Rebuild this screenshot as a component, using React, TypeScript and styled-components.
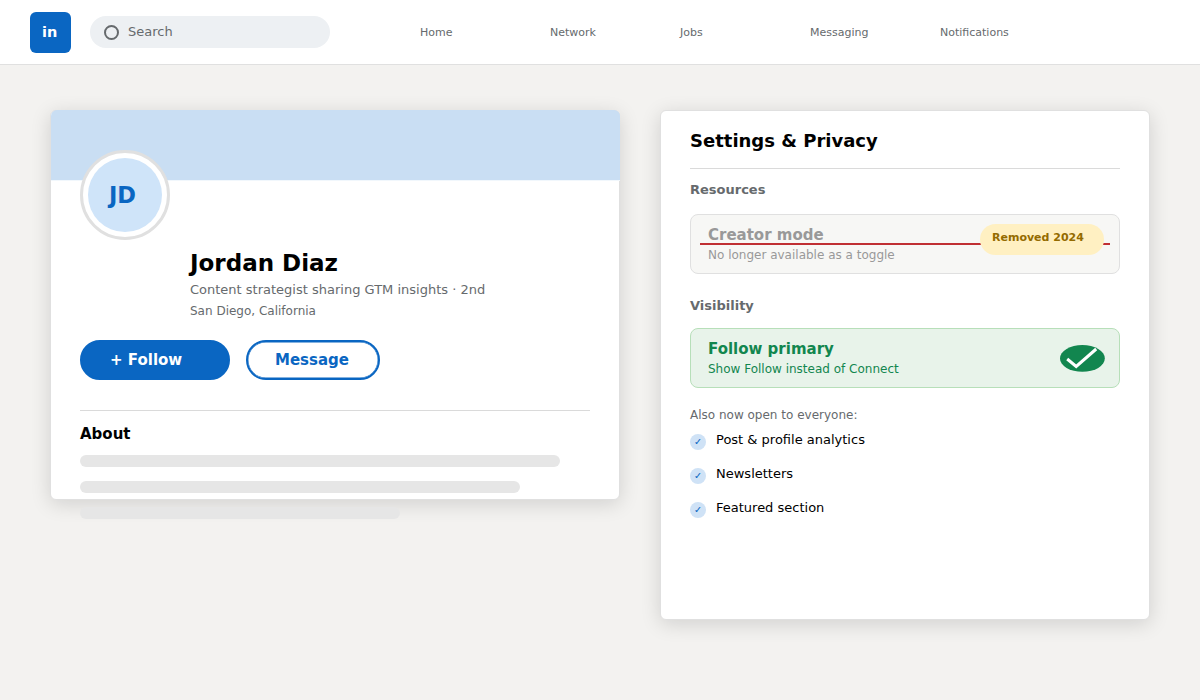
import React from "react";
import styled, { createGlobalStyle } from "styled-components";

const GlobalStyle = createGlobalStyle`
  * { box-sizing: border-box; }
  body {
    margin: 0;
    background: #f3f2f0;
    font-family: "DejaVu Sans", Verdana, sans-serif;
    overflow: hidden;
  }
`;

const Page = styled.div`
  width: 1200px;
  height: 700px;
  background: #f3f2f0;
  overflow: hidden;
`;

const Header = styled.header`
  display: flex;
  align-items: flex-start;
  height: 65px;
  padding: 12px 30px 0;
  background: #fff;
  border-bottom: 1px solid #e0e0e0;
`;

const Logo = styled.div`
  width: 40.5px;
  height: 40.5px;
  padding: 10px 0 0 12px;
  border-radius: 6px;
  background: #0a66c2;
  color: #fff;
  font-size: 14.5px;
  font-weight: 700;
  line-height: 20px;
`;

const Search = styled.div`
  display: flex;
  width: 240px;
  height: 32px;
  margin: 4px 0 0 19.5px;
  padding: 0 0 0 14px;
  border-radius: 17px;
  background: #edf0f3;
  color: #666a6d;
  font-size: 13px;
  line-height: 32px;
`;

const SearchRing = styled.span`
  width: 15px;
  height: 15px;
  margin: 9px 9px 0 0;
  border: 2px solid #666a6d;
  border-radius: 50%;
`;

const Nav = styled.nav`
  display: grid;
  grid-template-columns: repeat(5, 130px);
  margin: 11px 0 0 90px;
  color: #666a6d;
  font-size: 11px;
  line-height: 20px;
`;

const Columns = styled.main`
  display: flex;
  align-items: flex-start;
  gap: 40px;
  padding: 45px 0 0 50px;
`;

const Card = styled.section<{ $w: number; $h: number }>`
  width: ${(p) => p.$w}px;
  height: ${(p) => p.$h}px;
  border: 1px solid #e0e0e0;
  border-radius: 6px;
  background: #fff;
  box-shadow: 0 4px 20px rgba(0, 0, 0, 0.14);
`;

const Banner = styled.div`
  height: 71px;
  margin: -1px -1px 0 0;
  border-bottom: 1px solid #f1f7fc;
  border-radius: 6px 6px 0 0;
  background: #c9def3;
`;

const ProfileBody = styled.div`
  padding: 0 29px;
`;

const Avatar = styled.div`
  position: relative;
  width: 90px;
  height: 90px;
  margin-top: -31px;
  padding: 5px;
  border: 3px solid #e0e0e0;
  border-radius: 50%;
  background: #fff;
`;

const Initials = styled.div`
  height: 74px;
  padding: 27px 0 0 21px;
  border-radius: 50%;
  background: #cfe4f9;
  color: #0a66c2;
  font-size: 22.5px;
  font-weight: 700;
  line-height: 20px;
`;

const Identity = styled.div`
  margin: 13px 0 0 110px;
`;

const Line = styled.div<{ $size: number; $color?: string; $bold?: boolean; $top?: number }>`
  margin-top: ${(p) => p.$top ?? 0}px;
  color: ${(p) => p.$color ?? "#000"};
  font-size: ${(p) => p.$size}px;
  font-weight: ${(p) => (p.$bold ? 700 : 400)};
  line-height: 20px;
  white-space: nowrap;
`;

const Actions = styled.div`
  display: flex;
  gap: 16px;
  margin-top: 19px;
`;

const Button = styled.button<{ $w: number; $inset: number; $filled?: boolean }>`
  width: ${(p) => p.$w}px;
  height: 40px;
  padding: 0 0 0 ${(p) => p.$inset}px;
  border: 2px solid #0a66c2;
  border-radius: 20px;
  box-shadow: inset 0 0 0 0.4px #0a66c2;
  background: ${(p) => (p.$filled ? "#0a66c2" : "#fff")};
  color: ${(p) => (p.$filled ? "#fff" : "#0a66c2")};
  font: 700 15px/20px "DejaVu Sans", sans-serif;
  text-align: left;
`;

const Divider = styled.hr<{ $top: number }>`
  height: 1px;
  margin: ${(p) => p.$top}px 0 0;
  border: 0;
  background: #dadada;
`;

const Skeleton = styled.div`
  display: grid;
  gap: 14px;
  margin-top: 11px;
`;

const Bar = styled.div<{ $w: number }>`
  width: ${(p) => p.$w}px;
  height: 12px;
  border-radius: 6px;
  background: #e6e6e6;
`;

const SettingsBody = styled.div`
  padding: 20px 29px 0;
`;

const Option = styled.div<{ $on?: boolean; $top: number }>`
  position: relative;
  height: 60px;
  margin-top: ${(p) => p.$top}px;
  padding: 10px 0 0 17px;
  border: 1px solid ${(p) => (p.$on ? "#b7dfb9" : "#e0e0e0")};
  border-radius: 8px;
  background: ${(p) => (p.$on ? "#e8f3ea" : "#f7f7f5")};
`;

const Strike = styled.div`
  position: absolute;
  top: 28px;
  left: 9px;
  width: 410px;
  height: 2px;
  background: #c02f33;
`;

const Badge = styled.div`
  position: absolute;
  top: 9px;
  right: 15px;
  width: 124px;
  height: 31px;
  padding: 4px 0 0 12px;
  border-radius: 16px;
  background: #fff0c2;
  color: #946b00;
  font-size: 11px;
  font-weight: 700;
  line-height: 20px;
`;

const Tick = styled.svg`
  position: absolute;
  top: 16px;
  right: 14px;
`;

const Perks = styled.ul`
  display: grid;
  gap: 14px;
  margin: 5px 0 0;
  padding: 0;
  list-style: none;
`;

const Perk = styled.li`
  display: flex;
  gap: 10px;
  height: 20px;
  font-size: 13px;
  line-height: 20px;
`;

const PerkMark = styled.span`
  width: 16px;
  height: 16px;
  margin-top: 4px;
  border-radius: 50%;
  background: #cfe2f6;
  color: #0a66c2;
  font-size: 9.5px;
  line-height: 15px;
  text-align: center;
`;

const navItems = ["Home", "Network", "Jobs", "Messaging", "Notifications"];
const perks = ["Post & profile analytics", "Newsletters", "Featured section"];
const muted = "#666a6d";

export default function App() {
  return (
    <Page>
      <GlobalStyle />
      <Header>
        <Logo>in</Logo>
        <Search>
          <SearchRing />
          Search
        </Search>
        <Nav>
          {navItems.map((item) => (
            <span key={item}>{item}</span>
          ))}
        </Nav>
      </Header>
      <Columns>
        <Card $w={570} $h={390}>
          <Banner />
          <ProfileBody>
            <Avatar>
              <Initials>JD</Initials>
            </Avatar>
            <Identity>
              <Line $size={23} $bold>Jordan Diaz</Line>
              <Line $size={13} $color={muted} $top={7}>
                Content strategist sharing GTM insights · 2nd
              </Line>
              <Line $size={12} $color={muted} $top={1}>San Diego, California</Line>
            </Identity>
            <Actions>
              <Button $w={150} $inset={28} $filled>+ Follow</Button>
              <Button $w={134} $inset={27}>Message</Button>
            </Actions>
            <Divider $top={30} />
            <Line $size={15} $bold $top={13}>About</Line>
            <Skeleton>
              <Bar $w={480} />
              <Bar $w={440} />
              <Bar $w={320} />
            </Skeleton>
          </ProfileBody>
        </Card>
        <Card $w={490} $h={510}>
          <SettingsBody>
            <Line $size={18} $bold>Settings &amp; Privacy</Line>
            <Divider $top={17} />
            <Line $size={13} $bold $color={muted} $top={11}>Resources</Line>
            <Option $top={14}>
              <Line $size={15} $bold $color="#999">Creator mode</Line>
              <Line $size={12} $color="#999">No longer available as a toggle</Line>
              <Strike />
              <Badge>Removed 2024</Badge>
            </Option>
            <Line $size={13} $bold $color={muted} $top={22}>Visibility</Line>
            <Option $on $top={12}>
              <Line $size={15} $bold $color="#12864f">Follow primary</Line>
              <Line $size={12} $color="#12864f">Show Follow instead of Connect</Line>
              <Tick width="45" height="27" viewBox="0 0 45 27" fill="none">
                <ellipse cx="22.4" cy="13.4" rx="22.4" ry="13.4" fill="#12864f" />
                <path d="M7.2 14L16.2 21.5L36.2 4" stroke="#fff" strokeWidth="3" />
              </Tick>
            </Option>
            <Line $size={12} $color={muted} $top={17}>Also now open to everyone:</Line>
            <Perks>
              {perks.map((perk) => (
                <Perk key={perk}>
                  <PerkMark>✓</PerkMark>
                  {perk}
                </Perk>
              ))}
            </Perks>
          </SettingsBody>
        </Card>
      </Columns>
    </Page>
  );
}
